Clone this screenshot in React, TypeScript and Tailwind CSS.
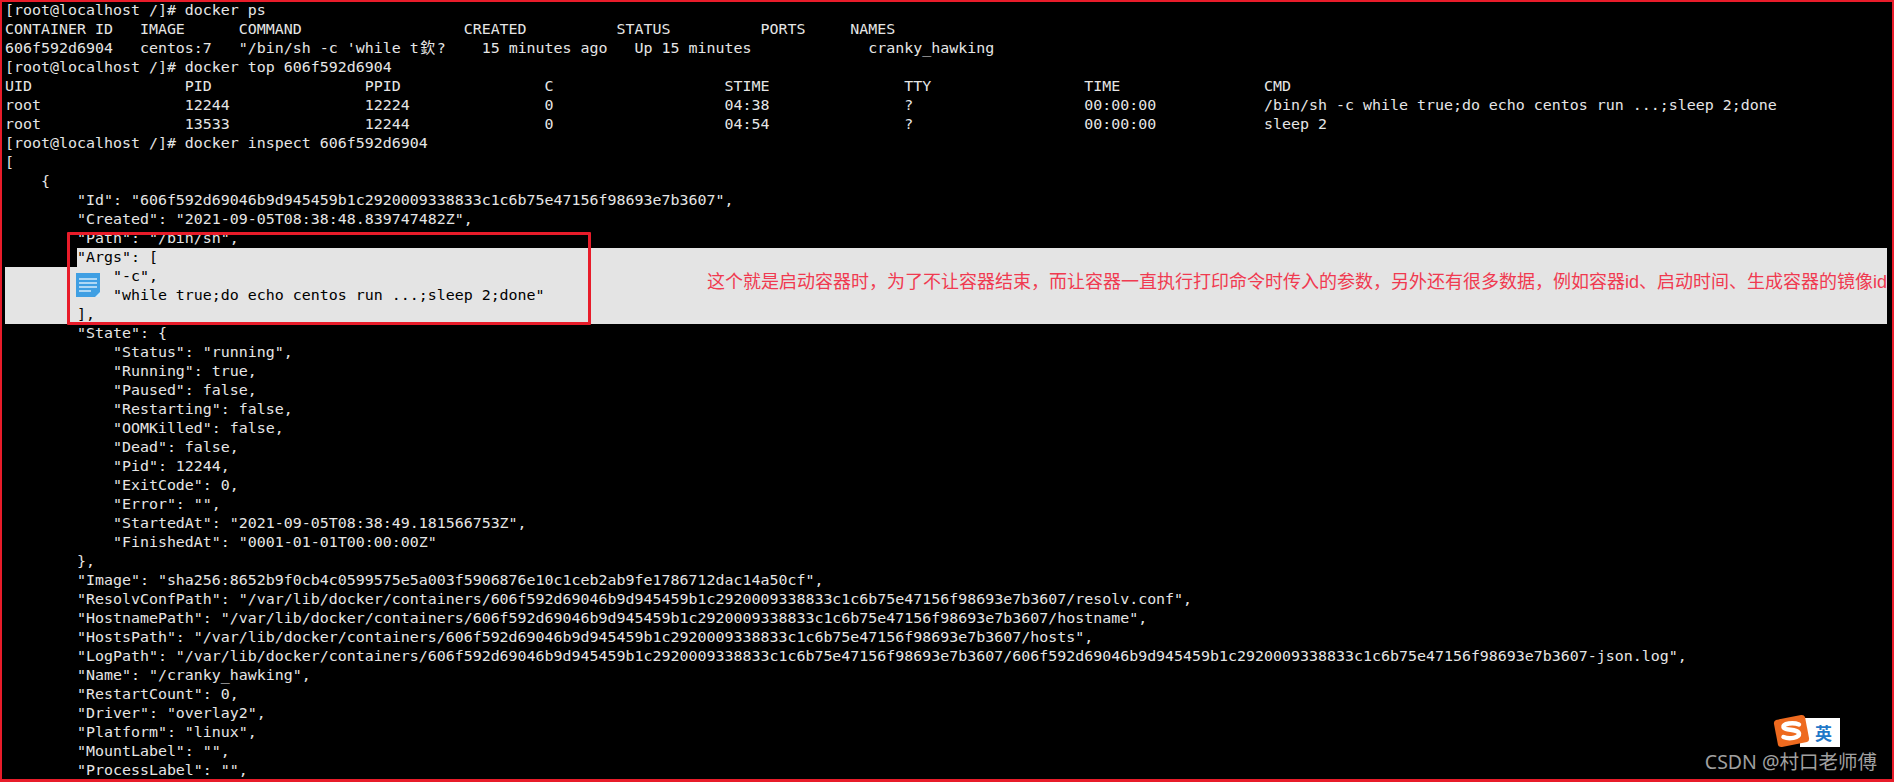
import React from "react";

const col = (a: string[]) => a.map((s, i) => (i < a.length - 1 ? s.padEnd(20, " ") : s)).join("");
const ID = "606f592d69046b9d945459b1c2920009338833c1c6b75e47156f98693e7b3607";
const DIR = `/var/lib/docker/containers/${ID}`;

const before: React.ReactNode[] = [
  "[root@localhost /]# docker ps",
  "CONTAINER ID   IMAGE      COMMAND                  CREATED          STATUS          PORTS     NAMES",
  <>
    {`606f592d6904   centos:7   "/bin/sh -c 'while t`}
    <span className="inline-block w-[18px] text-center font-['Noto_Sans_CJK_TC',monospace] leading-none">欽</span>
    {`?    15 minutes ago   Up 15 minutes             cranky_hawking`}
  </>,
  "[root@localhost /]# docker top 606f592d6904",
  col(["UID", "PID", "PPID", "C", "STIME", "TTY", "TIME", "CMD"]),
  col(["root", "12244", "12224", "0", "04:38", "?", "00:00:00", "/bin/sh -c while true;do echo centos run ...;sleep 2;done"]),
  col(["root", "13533", "12244", "0", "04:54", "?", "00:00:00", "sleep 2"]),
  "[root@localhost /]# docker inspect 606f592d6904",
  "[",
  "    {",
  `        "Id": "${ID}",`,
  `        "Created": "2021-09-05T08:38:48.839747482Z",`,
  `        "Path": "/bin/sh",`,
];

const after = [
  `        "State": {`,
  `            "Status": "running",`,
  `            "Running": true,`,
  `            "Paused": false,`,
  `            "Restarting": false,`,
  `            "OOMKilled": false,`,
  `            "Dead": false,`,
  `            "Pid": 12244,`,
  `            "ExitCode": 0,`,
  `            "Error": "",`,
  `            "StartedAt": "2021-09-05T08:38:49.181566753Z",`,
  `            "FinishedAt": "0001-01-01T00:00:00Z"`,
  `        },`,
  `        "Image": "sha256:8652b9f0cb4c0599575e5a003f5906876e10c1ceb2ab9fe1786712dac14a50cf",`,
  `        "ResolvConfPath": "${DIR}/resolv.conf",`,
  `        "HostnamePath": "${DIR}/hostname",`,
  `        "HostsPath": "${DIR}/hosts",`,
  `        "LogPath": "${DIR}/${ID}-json.log",`,
  `        "Name": "/cranky_hawking",`,
  `        "RestartCount": 0,`,
  `        "Driver": "overlay2",`,
  `        "Platform": "linux",`,
  `        "MountLabel": "",`,
  `        "ProcessLabel": "",`,
];

const Line = ({ children }: { children: React.ReactNode }) => (
  <div className="h-[19px] leading-[19px] whitespace-pre">{children}</div>
);

const Selected = ({ children, first }: { children: React.ReactNode; first?: boolean }) => (
  <div className={`h-[19px] leading-[19px] whitespace-pre bg-[#e4e4e4] text-black ${first ? "ml-[72px] w-[1810px]" : "w-[1882px]"}`}>
    {children}
  </div>
);

export default function App() {
  return (
    <div className="relative w-[1894px] h-[782px] overflow-hidden bg-black pt-px pl-[5px] text-[#e6e6e6] font-['DejaVu_Sans_Mono',monospace] text-[14.95px]">
      {before.map((l, i) => (
        <Line key={i}>{l}</Line>
      ))}
      <Selected first>{`"Args": [`}</Selected>
      <Selected>{`            "-c",`}</Selected>
      <Selected>{`            "while true;do echo centos run ...;sleep 2;done"`}</Selected>
      <Selected>{`        ],`}</Selected>
      {after.map((l, i) => (
        <Line key={i}>{l}</Line>
      ))}

      {/* annotation box */}
      <div className="absolute left-[67px] top-[232px] w-[524px] h-[93px] border-[3px] border-[#e81c2a] rounded-[1px]" />

      {/* note icon */}
      <svg className="absolute left-[76px] top-[273px]" width="24" height="24" viewBox="0 0 24 24">
        <rect width="24" height="24" fill="#3f9fe3" />
        <path d="M3 6h18M3 10h18M3 14h18M3 18h12" stroke="#d5ecfb" strokeWidth="1.6" />
        <path d="M24 24h-5l5-5z" fill="#d5ecfb" />
      </svg>

      {/* red note */}
      <div className="absolute left-[707px] top-[270px] w-[1180px] overflow-hidden whitespace-nowrap text-[18px] leading-[24px] text-[#f03a50] font-['Liberation_Sans','Noto_Sans_CJK_SC',sans-serif]">
        这个就是启动容器时，为了不让容器结束，而让容器一直执行打印命令时传入的参数，另外还有很多数据，例如容器id、启动时间、生成容器的镜像id
      </div>

      {/* input method badge and watermark */}
      <div className="absolute left-[1700px] top-[714px] w-[177px] flex flex-col items-end">
        <div className="flex items-center pr-[37px]">
          <svg className="relative z-10 -mr-[10px]" width="37" height="34" viewBox="0 0 37 34">
            <path d="M3 6 L28 1 Q31 .5 32 3 L36 24 Q36.5 27 34 28 L9 33 Q6 33.5 5 31 L1 10 Q.5 7 3 6z" fill="#ee6a1f" />
            <path d="M26 10.5 C20 8 10 9.5 10.5 13 C11 17 25 14.5 26 19.5 C26.5 24 16 25.5 10.5 23" fill="none" stroke="#fff" strokeWidth="4.5" strokeLinecap="round" />
          </svg>
          <div className="w-[40px] h-[29px] mt-[3px] bg-white flex items-center justify-center pl-[7px] text-[17px] font-bold text-[#1f78c8] font-['Noto_Sans_CJK_SC',sans-serif] leading-none">
            英
          </div>
        </div>
        <div className="mt-px text-[19.5px] leading-[26px] whitespace-nowrap text-[#a0a0a0] font-['Noto_Sans','Noto_Sans_CJK_SC',sans-serif]">
          CSDN @村口老师傅
        </div>
      </div>

      {/* image frame */}
      <div className="absolute inset-0 border-2 border-b-[3px] border-[#e81c2a] pointer-events-none" />
    </div>
  );
}
